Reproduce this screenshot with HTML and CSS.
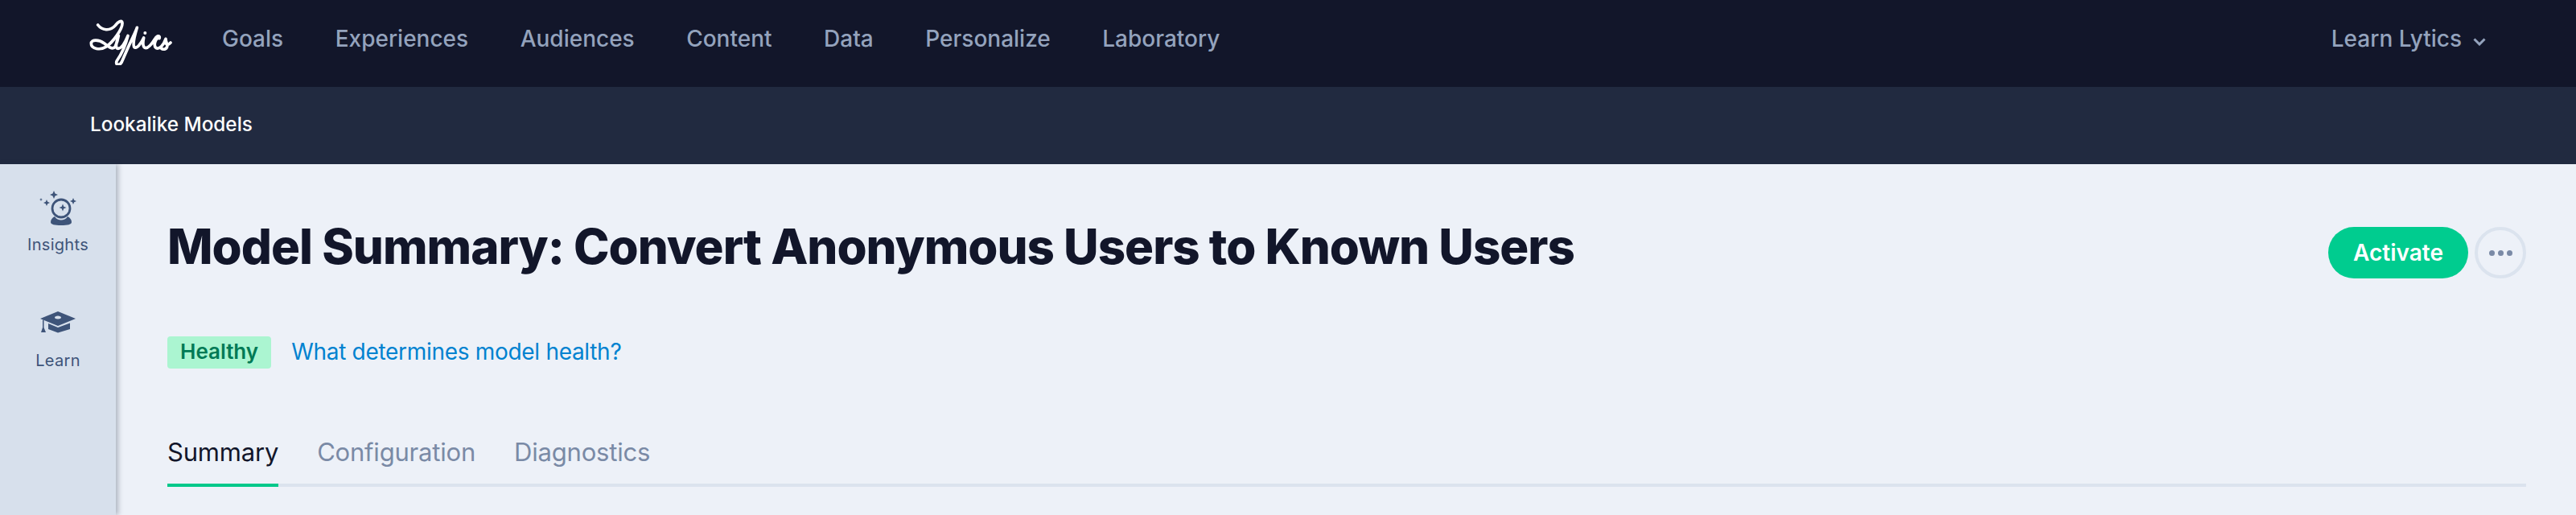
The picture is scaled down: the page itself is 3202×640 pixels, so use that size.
FILE: index.html
```html
<!DOCTYPE html>
<html lang="en">
<head>
    <meta charset="UTF-8">
    <title>Model Summary</title>
    <link rel="stylesheet" href="styles.css">
</head>
<body>
    <header class="top-nav">
        <svg class="logo" viewBox="60 30 312 180" role="img" aria-label="Lytics">
            <path d="M95 60C110 80 140 85 160 62C170 48 185 40 186 52C188 75 150 125 125 142C105 155 70 150 70 130C70 112 100 115 118 128C132 140 150 155 160 140C166 128 170 112 172 100C164 125 158 148 170 148C184 148 198 122 207 100C200 130 182 170 165 195C160 210 175 214 184 198C196 172 206 146 218 122C228 100 236 84 241 70C232 100 224 130 230 142C238 152 256 130 266 108C262 128 262 146 274 146C286 146 298 128 308 112C316 98 328 98 324 110C312 104 300 136 312 146C326 152 340 134 348 112C348 126 358 134 352 144C346 154 332 152 330 144M350 130C356 136 360 132 366 126" fill="none" stroke="#fff" stroke-width="11" stroke-linecap="round" stroke-linejoin="round"/>
            <circle cx="271" cy="90" r="6" fill="#fff"/>
        </svg>
        <nav class="nav-links">
            <a>Goals</a>
            <a>Experiences</a>
            <a>Audiences</a>
            <a>Content</a>
            <a>Data</a>
            <a>Personalize</a>
            <a>Laboratory</a>
        </nav>
        <div class="nav-learn">
            <span>Learn Lytics</span>
            <svg class="chevron" viewBox="0 0 16 10"><path d="M1.500 1.500L8 8L14.500 1.500" fill="none" stroke="#94a3bd" stroke-width="3"/></svg>
        </div>
    </header>
    <div class="sub-nav">Lookalike Models</div>
    <div class="layout">
        <aside class="sidebar">
            <div class="side-item">
                <svg class="side-icon" viewBox="0 0 48 48" fill="#3e5479">
                    <path d="M19 3L20.500 6.500L24 8L20.500 9.500L19 13L17.500 9.500L14 8L17.500 6.500Z"/>
                    <path d="M10 14L11.200 16.800L14 18L11.200 19.200L10 22L8.800 19.200L6 18L8.800 16.800Z"/>
                    <path d="M3 12L3.600 13.400L5 14L3.600 14.600L3 16L2.400 14.600L1 14L2.400 13.400Z"/>
                    <path d="M43 12L44.200 14.800L47 16L44.200 17.200L43 20L41.800 17.200L39 16L41.800 14.800Z"/>
                    <path d="M30 19.500L31.300 22.700L34.500 24L31.300 25.300L30 28.500L28.700 25.300L25.500 24L28.700 22.700Z"/>
                    <circle cx="28" cy="25" r="11" fill="none" stroke="#3e5479" stroke-width="2.800"/>
                    <path d="M20 35C22 38.500 25 39.500 28 39.500C31 39.500 34 38.500 36 35C39 36.500 41 39 41 42C41 45 36 46 28 46C20 46 15 45 15 42C15 39 17 36.500 20 35Z"/>
                </svg>
                <span>Insights</span>
            </div>
            <div class="side-item">
                <svg class="side-icon" viewBox="0 0 48 48" fill="#3e5479">
                    <path d="M24 9L46 18L24 27L2 18ZM24 14.500C21.500 14.500 20 15.500 20 16.500C20 17.500 21.500 18.500 24 18.500C26.500 18.500 28 17.500 28 16.500C28 15.500 26.500 14.500 24 14.500Z" fill-rule="evenodd"/>
                    <path d="M12 24L24 29L39 23.500V31L24 35.500L12 31Z"/>
                    <path d="M5 19.500H6.500V29L9 35H3L5 29Z"/>
                </svg>
                <span>Learn</span>
            </div>
        </aside>
        <main class="main">
            <div class="title-row">
                <h1>Model Summary: Convert Anonymous Users to Known Users</h1>
                <div class="actions">
                    <button class="btn-activate">Activate</button>
                    <button class="btn-more"><i></i><i></i><i></i></button>
                </div>
            </div>
            <div class="status-row">
                <span class="badge">Healthy</span>
                <a class="help-link">What determines model health?</a>
            </div>
            <div class="tabs">
                <a class="tab active">Summary</a>
                <a class="tab">Configuration</a>
                <a class="tab">Diagnostics</a>
            </div>
        </main>
    </div>
</body>
</html>
```

FILE: styles.css
```css
html, body { margin: 0; height: 640px; overflow: hidden; }
body { font-family: Inter, "Liberation Sans", sans-serif; background-color: #edf1f8; color: #12162a; }

.top-nav { display: flex; align-items: center; height: 108px; padding: 0 112px 0 110px; background-color: #12162a; box-sizing: border-box; }
.logo { width: 104px; height: 60px; margin-bottom: 6px; }
.nav-links { display: flex; gap: 64.500px; margin-left: 62px; margin-bottom: 12px; }
.nav-links a, .nav-learn { font-size: 28px; font-weight: 500; color: #94a3bd; }
.nav-learn { display: flex; align-items: center; gap: 14px; margin-left: auto; margin-bottom: 12px; }
.chevron { width: 16px; height: 10px; margin-top: 8px; }

.sub-nav { display: flex; align-items: center; height: 96px; padding-left: 112px; padding-bottom: 4px; box-sizing: border-box; background-color: #212a40; color: #fff; font-size: 24.300px; font-weight: 500; }

.layout { display: flex; height: 436px; }
.sidebar { flex: none; width: 144px; padding-top: 30px; box-sizing: border-box; background-color: #d7e0ec; box-shadow: 3px 0 6px rgba(30, 45, 70, .3); color: #3e5479; }
.side-item { display: flex; flex-direction: column; align-items: center; margin-bottom: 60px; font-size: 20px; line-height: 28px; letter-spacing: .3px; }
.side-icon { width: 48px; height: 48px; margin-bottom: 8px; overflow: visible; }

.main { flex: 1; padding: 66px 62px 0 64px; }
.title-row { display: flex; justify-content: space-between; align-items: flex-start; }
h1 { margin: 0; font-size: 60px; line-height: 72px; font-weight: 800; letter-spacing: -1px; }
.actions { display: flex; gap: 8px; margin-top: 12px; }
.btn-activate { height: 64px; width: 174px; border: none; border-radius: 32px; background-color: #00cc8f; color: #fff; font-family: inherit; font-size: 28px; font-weight: 600; }
.btn-more { display: flex; align-items: center; justify-content: center; gap: 4px; width: 64px; height: 64px; padding: 0; border: 4px solid #dbe3ee; border-radius: 50%; background: none; box-sizing: border-box; }
.btn-more i { width: 7px; height: 7px; border-radius: 50%; background-color: #7a8aa6; }

.status-row { display: flex; align-items: center; gap: 25px; margin-top: 72px; }
.badge { height: 40px; line-height: 38px; padding: 0 16px; border-radius: 4px; background-color: #abf5d1; color: #007a55; font-size: 26px; font-weight: 600; }
.help-link { font-size: 28px; letter-spacing: -.3px; color: #0082d0; margin-bottom: 2px; }

.tabs { display: flex; gap: 48px; margin-top: 84px; border-bottom: 4px solid #dbe3ee; }
.tab { padding-bottom: 19px; margin-bottom: -4px; border-bottom: 4px solid transparent; font-size: 31px; line-height: 40px; letter-spacing: -.2px; color: #7a8aa6; }
.tab.active { color: #12162a; border-bottom-color: #00c88a; }
```
